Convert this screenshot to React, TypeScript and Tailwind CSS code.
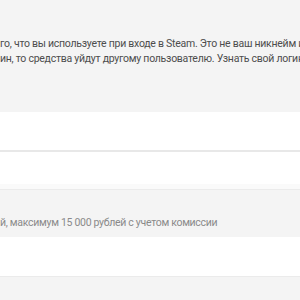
import React from "react";

function Line({ prefix, rest, shift }: { prefix: string; rest: string; shift: string }) {
  return (
    <div className={"flex whitespace-nowrap " + shift}>
      <span className="inline-block w-[300px] shrink-0 text-right overflow-hidden">{prefix}</span>
      <span>{rest}</span>
    </div>
  );
}

export default function App() {
  return (
    <div
      className="w-[300px] h-[300px] overflow-hidden bg-[#f4f4f4] flex flex-col"
      style={{ fontFamily: "Roboto, 'Noto Sans', sans-serif" }}
    >
      <div className="mt-[36px] text-[10.5px] tracking-[-0.26px] leading-[15px] text-[#4d4d4d]">
        <Line shift="-ml-[300px]" prefix="Укажите логин — то" rest="го, что вы используете при входе в Steam. Это не ваш никнейм и не имя профиля." />
        <Line shift="-ml-[300px]" prefix="Если вы укажете неверный лог" rest="ин, то средства уйдут другому пользователю. Узнать свой логин" />
      </div>
      <div className="mt-[46px] h-[38px] bg-white shrink-0" />
      <div className="h-[2px] bg-[#e8e8e8] shrink-0" />
      <div className="h-[32px] bg-white shrink-0" />
      <div className="h-[5px] bg-[#fafafa] shrink-0" />
      <div className="h-[1px] bg-[#ebebeb] shrink-0" />
      <div className="h-[47px] pt-[25px] shrink-0 text-[10.5px] leading-[15px] tracking-[-0.3px] text-[#8a8a8a]">
        <Line shift="-ml-[300px]" prefix="Минимум 100 рубле" rest="й, максимум 15 000 рублей с учетом комиссии" />
      </div>
      <div className="h-[39px] bg-white shrink-0" />
      <div className="h-[1px] bg-[#ebebeb] shrink-0" />
    </div>
  );
}
